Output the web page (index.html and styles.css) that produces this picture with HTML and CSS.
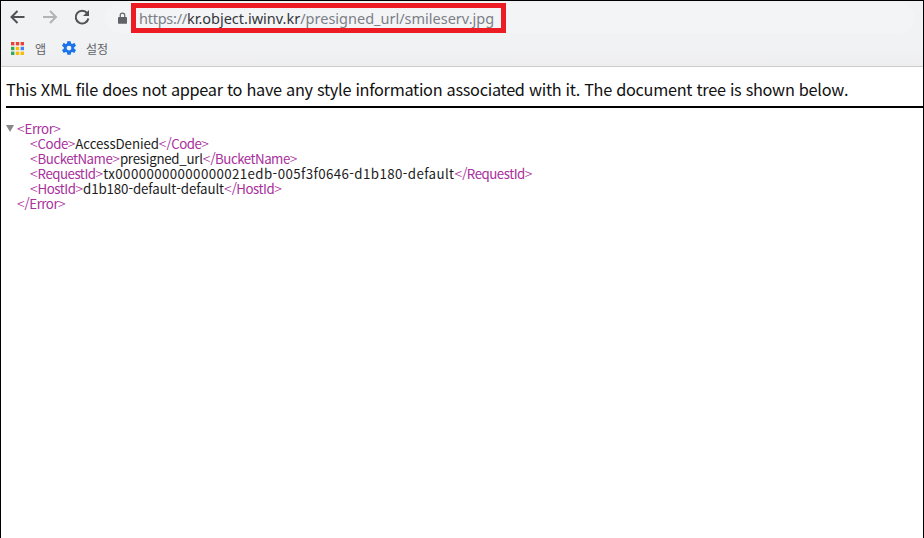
FILE: index.html
```html
<!DOCTYPE html>
<html lang="ko">
<head>
<meta charset="utf-8">
<title>presigned_url</title>
<link rel="stylesheet" href="styles.css">
</head>
<body>
<div class="frame">
  <header class="chrome">
    <div class="toolbar">
      <svg class="nav" width="18" height="18" viewBox="0 0 18 18"><path d="M16.500 9H3.500M9.500 3 3.500 9l6 6" fill="none" stroke="#505256" stroke-width="2"/></svg>
      <svg class="nav" width="18" height="18" viewBox="0 0 18 18"><path d="M2 9h13M9 3l6 6-6 6" fill="none" stroke="#b1b3b6" stroke-width="2"/></svg>
      <svg class="nav-reload" width="18" height="18" viewBox="0 0 18 18"><path d="M14.200 5.200A6.400 6.400 0 1 0 15.400 10.500" fill="none" stroke="#505256" stroke-width="2"/><path d="M16 2v6h-6z" fill="#505256"/></svg>
      <div class="omnibox">
        <svg class="lock" width="9" height="12" viewBox="0 0 10 13"><path d="M1 5.500h8a1 1 0 0 1 1 1V12a1 1 0 0 1-1 1H1a1 1 0 0 1-1-1V6.500a1 1 0 0 1 1-1z" fill="#5f6368"/><path d="M2.500 6V3.500a2.500 2.500 0 0 1 5 0V6" fill="none" stroke="#5f6368" stroke-width="1.300"/></svg>
        <div class="url-box"><span class="url-dim url-scheme">https://</span><span class="url-host">kr.object.iwinv.kr</span><span class="url-dim">/presigned_url/smileserv.jpg</span></div>
      </div>
    </div>
    <div class="bookmarks">
      <svg class="apps" width="13" height="13" viewBox="0 0 13.500 13.500">
        <rect x="0" y="0" width="3.500" height="3.500" fill="#ea4335"/><rect x="5" y="0" width="3.500" height="3.500" fill="#ea4335"/><rect x="10" y="0" width="3.500" height="3.500" fill="#ea4335"/>
        <rect x="0" y="5" width="3.500" height="3.500" fill="#34a853"/><rect x="5" y="5" width="3.500" height="3.500" fill="#fbbc05"/><rect x="10" y="5" width="3.500" height="3.500" fill="#4285f4"/>
        <rect x="0" y="10" width="3.500" height="3.500" fill="#34a853"/><rect x="5" y="10" width="3.500" height="3.500" fill="#fbbc05"/><rect x="10" y="10" width="3.500" height="3.500" fill="#fbbc05"/>
      </svg>
      <span class="bm-label bm-apps">앱</span>
      <svg class="gear" width="14" height="14" viewBox="1.200 1.400 11.600 11.100"><path fill="#1a73e8" fill-rule="evenodd" d="M5.600 0h2.800l.3 1.800 1.100.5L11.400 1.300l1.400 2.400-1.500 1.200v1.200l1.500 1.200-1.400 2.400-1.600-.9-1.100.5L8.400 11.100H5.600L5.300 9.300l-1.100-.5-1.600.9L1.200 7.300l1.500-1.200V4.900L1.200 3.700 2.600 1.300l1.600 1 1.100-.5z M7 3.600a2 2 0 1 0 0 4 2 2 0 0 0 0-4z" transform="translate(0 1.400)"/></svg>
      <span class="bm-label">설정</span>
    </div>
  </header>
  <main class="page">
    <p class="warning">This XML file does not appear to have any style information associated with it. The document tree is shown below.</p>
    <div class="tree">
      <div class="row"><span class="arrow"></span><span class="tag"><span class="br">&lt;</span>Error<span class="br">&gt;</span></span></div>
      <div class="row child"><span class="tag"><span class="br">&lt;</span>Code<span class="br">&gt;</span></span><span class="val-code">AccessDenied</span><span class="tag"><span class="br">&lt;</span>/Code<span class="br">&gt;</span></span></div>
      <div class="row child"><span class="tag"><span class="br">&lt;</span>BucketName<span class="br">&gt;</span></span><span class="val-bucket">presigned_url</span><span class="tag"><span class="br">&lt;</span>/BucketName<span class="br">&gt;</span></span></div>
      <div class="row child"><span class="tag"><span class="br">&lt;</span>RequestId<span class="br">&gt;</span></span><span class="val-request">tx00000000000000021edb-005f3f0646-d1b180-default</span><span class="tag"><span class="br">&lt;</span>/RequestId<span class="br">&gt;</span></span></div>
      <div class="row child"><span class="tag"><span class="br">&lt;</span>HostId<span class="br">&gt;</span></span><span class="val-host">d1b180-default-default</span><span class="tag"><span class="br">&lt;</span>/HostId<span class="br">&gt;</span></span></div>
      <div class="row close"><span class="tag"><span class="br">&lt;</span>/Error<span class="br">&gt;</span></span></div>
    </div>
  </main>
</div>
</body>
</html>
```
FILE: styles.css
```css
* { box-sizing: border-box; }
html, body { margin: 0; padding: 0; height: 100%; background: #fff; overflow: hidden; }
.frame {
  height: 538px;
  border: 1px solid #000;
  border-bottom: 0;
  display: flex;
  flex-direction: column;
  font-family: "Noto Sans CJK KR", "Noto Sans", sans-serif;
  color: #111;
}
.chrome {
  height: 66px;
  background: linear-gradient(#f1f2f4 0, #f1f2f4 70%, #eeeeef 100%);
  border-bottom: 1px solid #ccc;
  flex: none;
}
.toolbar {
  height: 32px;
  display: flex;
  align-items: center;
  padding-left: 7px;
}
.nav { flex: none; margin-right: 14px; }
.nav:first-child { margin-right: 15px; }
.nav-reload { flex: none; margin-right: 14px; }
.omnibox {
  flex: 1;
  height: 30px;
  margin: 1px 8px 0 0;
  padding-left: 13px;
  display: flex;
  align-items: center;
  background: #f3f4f6;
  border-radius: 15px;
}
.lock { flex: none; margin-right: 4px; }
.url-box {
  width: 375px;
  height: 30px;
  border: 5px solid #ed1c24;
  display: flex;
  align-items: center;
  padding-left: 3px;
  font-family: "Noto Sans", sans-serif;
  font-size: 14.500px;
  white-space: nowrap;
}
.url-dim { color: #7c7f86; }
.url-scheme { letter-spacing: -0.25px; }
.url-host { color: #33363a; }
.bookmarks {
  height: 32px;
  display: flex;
  align-items: center;
  padding: 0 0 2px 10px;
  font-size: 12px;
  color: #5f6368;
}
.apps { flex: none; margin-right: 11px; }
.bm-apps { margin-right: 16px; }
.gear { flex: none; margin-right: 10px; }
.page { flex: 1; padding: 0 0 0 5px; }
.warning {
  margin: 0;
  padding-top: 9px;
  height: 41px;
  line-height: 26px;
  font-size: 16.300px;
  letter-spacing: -0.29px;
  border-bottom: 2px solid #000;
  white-space: nowrap;
  color: #111;
}
.tree {
  padding-top: 13px;
  font-size: 13.300px;
  line-height: 15px;
  color: #1c1c1c;
}
.row { white-space: nowrap; padding-left: 11px; position: relative; height: 15px; }
.child { padding-left: 24px; }
.tag { color: #a8309b; letter-spacing: -0.5px; }
.br { font-size: 14.200px; font-weight: 300; letter-spacing: 0; line-height: 0; }
.val-code { letter-spacing: -0.1px; }
.val-bucket { letter-spacing: -0.25px; }
.val-request { letter-spacing: 0.4px; }
.val-host { letter-spacing: -0.1px; }
.arrow {
  position: absolute;
  left: 0;
  top: 4px;
  border-left: 4px solid transparent;
  border-right: 4px solid transparent;
  border-top: 7px solid #888;
}
```
